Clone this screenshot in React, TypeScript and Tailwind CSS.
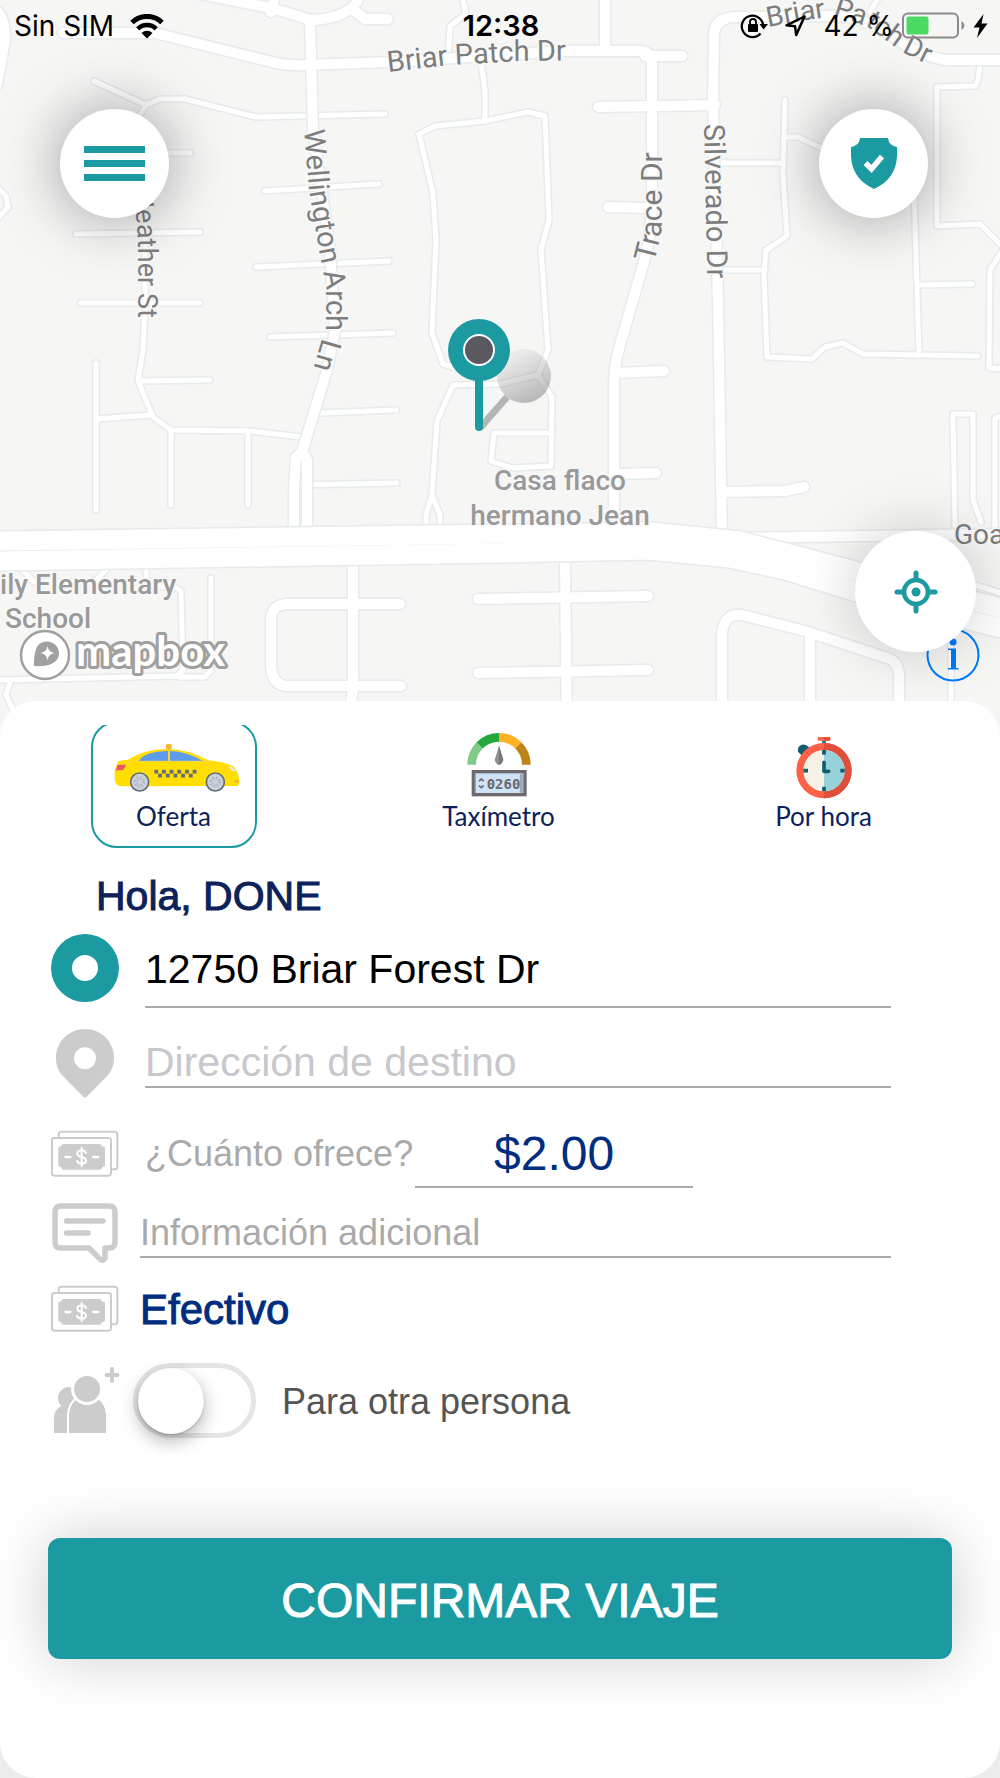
import { useState } from "react"

const smallRoads = [
  "M462 -4 L466 14 L450 26 L448 60",
  "M481 62 L485 90 L485 121",
  "M538 375 L548 350 L541 250 L549 220 L545 116 L528 112 L485 121 L435 126 L419 134 L433 193 L436 240 L432 333 L443 364 L460 369",
  "M538 375 L500 384 L453 385 L437 421 L432 495 L426 515 V530",
  "M432 495 L440 515 V530",
  "M538 375 L552 397 L551 466 L512 468 L491 461 L494 433 L552 433",
  "M94 81 L146 105 L160 99 L185 99 L256 117 L385 114",
  "M146 105 L138 118 L145 200 V310 L143 350 L138 381 L153 417 L171 430 L250 431 L302 437",
  "M168 153 H190",
  "M76 234 L200 232",
  "M81 303 H200",
  "M265 191 L379 184",
  "M256 267 L389 261",
  "M270 337 L393 333",
  "M-4 186 L6 196 L8 207 L-2 218",
  "M96 363 V510",
  "M96 419 L151 415",
  "M138 381 L210 380",
  "M171 430 V505",
  "M248 431 V505",
  "M318 413 L396 410",
  "M295 485 L397 483",
  "M145 565 L148 587 L175 587 L181 591 L183 670 L177 676 L-4 680",
  "M18 565 L34 582 H94 L108 568",
  "M211 578 V670 L205 677 H180",
  "M10 682 L6 695 L14 712",
  "M870 12 L880 -5",
  "M785 100 L783 175 L787 236 L766 250 L764 275 L767 357 L812 359 L825 347 L843 343 L863 354 L978 356",
  "M717 163 H782",
  "M720 270 H765",
  "M787 137 H798 L830 152",
  "M914 190 L919 355",
  "M917 285 L972 284",
  "M980 65 L978 80 L975 86 L937 87 V226 L980 224 L1004 248 L990 270 L989 368 L1004 369",
  "M955 530 L953 414 H973 L973 500 L981 522",
  "M1004 415 L995 418 V528",
  "M975 585 L1004 594",
  "M951 640 V740",
]

const mediumRoads = [
  "M190 -8 L275 9 L311 20 Q335 20 352 8 Q358 2 360 -6",
  "M352 9 L365 19 H388",
  "M275 -5 L271 12",
  "M63 33 H155 L268 61 Q285 66 305 65 L390 62 L565 51 H640 Q652 51 652 65 V200 Q651 240 643 265 L620 345 Q614 365 614 385 V515",
  "M310 20 L313 130 L330 250 L335 330 L327 370 L302 452 L296 457 L294 490 V545",
  "M302 452 L307 460 V545",
  "M-2 12 Q6 22 5 40 L-3 84",
  "M605 -4 V50",
  "M645 56 H682",
  "M598 107 L715 105",
  "M608 207 L650 208",
  "M1004 60 H945 Q920 56 895 38 Q865 16 830 16 L735 17 Q714 18 714 35 L713 100 L715 200 L718 300 L722 540",
  "M615 373 L664 371",
  "M615 474 L656 473",
  "M722 492 L785 491 L804 487",
  "M720 538 L1004 534",
  "M353 560 V690 L346 730",
  "M400 604 H287 Q271 605 271 620 V666 Q272 685 287 686 H401",
  "M478 599 L648 596",
  "M478 673 L648 670",
  "M565 560 L567 740",
  "M722 740 V633 Q724 613 742 615 L805 631 L890 659 Q900 664 899 680 V740",
  "M810 635 V740",
]

const mainRoads = [
  "M-5 541 L500 534 L650 532 L740 541 L805 558 L865 574 L1005 609",
  "M-5 561 L500 553 L650 550 L730 558 L785 570 L860 593 L1005 629",
]

const streets = [
  { id: "briar", d: "M388 72 L450 65 L520 61 L600 60", size: 29, name: "Briar Patch Dr" },
  { id: "briar-east", d: "M768 27 L800 21 L835 16 L868 27 L900 51 L950 76", size: 28, name: "Briar Patch Dr" },
  { id: "wellington", d: "M304 130 L309 190 L320 255 L326 285 L326 325 L310 380", size: 29, name: "Wellington Arch Ln" },
  { id: "heather", d: "M133 191 L137 225 L138 245 V340", size: 27, name: "Heather St" },
  { id: "trace", d: "M654 263 L661 235 L662 215 V130", size: 30, name: "Trace Dr" },
  { id: "silverado", d: "M704 124 L708 310", size: 29, name: "Silverado Dr" },
]

function Roads({ paths, width }: { paths: string[]; width: number }) {
  return (
    <g fill="none" strokeLinecap="round" strokeLinejoin="round">
      {paths.map((d) => (
        <path key={d} d={d} stroke="#e6ecea" strokeWidth={width + 3} />
      ))}
      {paths.map((d) => (
        <path key={d + "fill"} d={d} stroke="#fff" strokeWidth={width} />
      ))}
    </g>
  )
}

function MapCanvas() {
  return (
    <svg className="absolute inset-0 h-full w-full" viewBox="0 0 1000 736" preserveAspectRatio="xMidYMin slice">
      <defs>
        {streets.map((s) => (
          <path key={s.id} id={s.id} d={s.d} />
        ))}
        <linearGradient id="pinShade" x1="0.2" y1="0" x2="0.7" y2="1">
          <stop offset="0.1" stopColor="#999" stopOpacity="0.1" />
          <stop offset="1" stopColor="#888" stopOpacity="0.6" />
        </linearGradient>
      </defs>
      <rect width="1000" height="736" fill="#f6f6f5" />
      <Roads paths={smallRoads} width={5} />
      <Roads paths={mediumRoads} width={10} />
      <Roads paths={mainRoads} width={19} />

      <g fill="#7d7d7d" stroke="#f8f8f8" strokeWidth="3" paintOrder="stroke" fontFamily="Roboto, sans-serif">
        {streets.map((s) => (
          <text key={s.id} fontSize={s.size}>
            <textPath href={"#" + s.id}>{s.name}</textPath>
          </text>
        ))}
        <text x="954" y="544" fontSize="28">Goa</text>
      </g>
      <g fill="#999" stroke="#f8f8f8" strokeWidth="3" paintOrder="stroke" fontFamily="Roboto, sans-serif" fontSize="28" fontWeight="500">
        <text x="560" y="490" textAnchor="middle">Casa flaco</text>
        <text x="560" y="525" textAnchor="middle">hermano Jean</text>
        <text x="0" y="594">ily Elementary</text>
        <text x="5" y="628">School</text>
      </g>

      <path d="M480 428 L507 397" stroke="#b5b5b5" strokeWidth="7" />
      <circle cx="524" cy="376" r="27" fill="url(#pinShade)" />
      <path d="M479 375 V427" stroke="#1b9aa1" strokeWidth="8" strokeLinecap="round" />
      <circle cx="479" cy="350" r="31" fill="#1b9aa1" />
      <circle cx="479" cy="350" r="15" fill="#5a5960" stroke="#fff" strokeWidth="2" />
    </svg>
  )
}

function StatusBar() {
  return (
    <header className="grid h-[52px] grid-cols-[1fr_auto_1fr] items-center pr-3 pl-[14px] font-['Inter',sans-serif] text-[28px] text-black">
      <div className="flex items-center gap-4">
        <span>Sin SIM</span>
        <svg width="34" height="25" viewBox="0 0 34 25">
          <path d="M2 8.500 A21.500 21.500 0 0 1 32 8.500" fill="none" stroke="#000" strokeWidth="5" />
          <path d="M7.800 14.800 A13 13 0 0 1 26.200 14.800" fill="none" stroke="#000" strokeWidth="4.500" />
          <path d="M17 24.500 L11.500 19 A8 8 0 0 1 22.500 19 Z" />
        </svg>
      </div>
      <span className="text-[29px] font-semibold">12:38</span>
      <div className="flex items-center justify-end">
        <svg width="28" height="26" viewBox="0 0 28 26">
          <path d="M20.500 20.500 A10.700 10.700 0 1 1 23 11.500" fill="none" stroke="#000" strokeWidth="2.200" />
          <path d="M19.500 11 H28 L23.500 16.500 Z" />
          <rect x="8" y="11" width="10" height="8" rx="1" />
          <path d="M10 11.500 V9 A3 3 0 0 1 16 9 V11.500" fill="none" stroke="#000" strokeWidth="1.800" />
        </svg>
        <svg className="ml-4" width="23" height="24" viewBox="0 0 23 24">
          <path d="M20.500 2.500 L2.500 11.300 L11 12.200 L12.200 21 Z" fill="none" stroke="#000" strokeWidth="2.500" strokeLinejoin="round" />
        </svg>
        <span className="ml-4">42 %</span>
        <svg className="ml-2" width="63" height="28" viewBox="0 0 63 28">
          <rect x="1" y="1.500" width="55" height="24" rx="5" fill="none" stroke="#8c8c8c" strokeWidth="2" />
          <rect x="4.500" y="4.500" width="22" height="18" rx="2" fill="#4cd964" />
          <path d="M59.500 9 Q62.500 11 62.500 13.500 Q62.500 16 59.500 18 Z" fill="#8c8c8c" />
        </svg>
        <svg className="ml-2" width="15" height="26" viewBox="0 0 15 26">
          <path d="M10.500 1 L0.500 14.500 H6.500 L4 25 L14.500 10.500 H8.500 Z" />
        </svg>
      </div>
    </header>
  )
}

function MapboxLogo() {
  return (
    <svg width="216" height="54" viewBox="0 0 216 54">
      <circle cx="26" cy="27" r="24" fill="#fff" stroke="#a0a09e" strokeWidth="2.500" />
      <path d="M15 38 C15 25 16.500 13.500 28 13.500 A12 12 0 0 1 40 25.500 C40 35 29 39 15 38 Z" fill="#a0a09e" />
      <path d="M28.500 18 Q29.500 24 35.500 25 Q29.500 26 28.500 32 Q27.500 26 21.500 25 Q27.500 24 28.500 18 Z" fill="#fff" />
      <text x="57" y="38" fontFamily="Lato, sans-serif" fontSize="42" fontWeight="700" fill="#fff" stroke="#a0a09e" strokeWidth="6" strokeLinejoin="round" paintOrder="stroke">
        mapbox
      </text>
    </svg>
  )
}

function TaxiIcon() {
  return (
    <svg width="132" height="68" viewBox="202 99 396 204">
      <path d="M376 152 V139 Q376 135 380 135 H389 Q393 135 393 139 V152 Z" fill="#fdb62f" />
      <path d="M222 215 L232 187 Q240 184 262 182 Q310 151 375 150 Q440 149 503 184 Q555 190 580 203 Q594 216 596 250 Q596 260 588 261 L240 262 Q224 260 222 240 Z" fill="#ffde00" />
      <path d="M295 186 Q310 158 382 156 V186 Z" fill="#5d9cec" />
      <path d="M388 156 Q440 158 486 186 H388 Z" fill="#5d9cec" />
      <path d="M262 187 H510" stroke="#fdcf55" strokeWidth="3" />
      <path d="M385 154 V188" stroke="#fdcf55" strokeWidth="3" />
      <path d="M231 197 H257 L247 214 H225 Z" fill="#ed5565" />
      <path d="M562 201 Q580 203 588 217 L575 216 Z" fill="#e6e9ed" />
      <path d="M583 247 H594" stroke="#f6a04d" strokeWidth="5" />
      <path d="M341 218 H470" stroke="#656d78" strokeWidth="11" strokeDasharray="11.500 11.500" />
      <path d="M352.500 230 H460" stroke="#656d78" strokeWidth="11" strokeDasharray="11.500 11.500" />
      {[297, 524].map((cx) => (
        <g key={cx}>
          <circle cx={cx} cy="249" r="27" fill="#ccd1d9" stroke="#656d78" strokeWidth="5" />
          <circle cx={cx} cy="249" r="12" fill="none" stroke="#aab2bc" strokeWidth="9" strokeDasharray="4 5.400" />
        </g>
      ))}
    </svg>
  )
}

function TaximeterIcon() {
  return (
    <svg width="70" height="68" viewBox="132 99 210 204">
      <g fill="none" strokeWidth="26">
        <path d="M155 197 A82 82 0 0 1 179 139" stroke="#7dcb87" />
        <path d="M179 139 A82 82 0 0 1 237 115" stroke="#24a839" />
        <path d="M237 115 A82 82 0 0 1 295 139" stroke="#ffb123" />
        <path d="M295 139 A82 82 0 0 1 319 197" stroke="#bf8418" />
      </g>
      <path d="M237 140 L250 183 Q246 196 237 198 Q227 196 224 183 Z" fill="#909090" />
      <path d="M237 140 L250 183 Q246 196 237 198 Z" fill="#777" />
      <rect x="160" y="218" width="155" height="69" fill="#cfe3f6" stroke="#6c686e" strokeWidth="10" />
      <path d="M166 224 V281" stroke="#99a7bb" strokeWidth="4" />
      <path d="M304 224 V281" stroke="#99a7bb" strokeWidth="9" />
      <path d="M177 246 L184 240 L191 246 M177 260 L184 266 L191 260" fill="none" stroke="#6c686e" strokeWidth="5" />
      <text x="200" y="269" fontFamily="'DejaVu Sans Mono', monospace" fontSize="42" fontWeight="700" fill="#6c686e">
        0260
      </text>
    </svg>
  )
}

function StopwatchIcon() {
  return (
    <svg width="60" height="68" viewBox="1121 99 180 204">
      <path d="M1145 170 L1133 158 Q1130 142 1145 137 Q1156 134 1166 145 L1170 148 Z" fill="#0f5d6e" />
      <path d="M1211 124 V136" stroke="#2d8296" strokeWidth="12" />
      <rect x="1192" y="114" width="38" height="11" rx="3" fill="#fd6249" />
      <path d="M1211 114 H1227 Q1230 114 1230 119 Q1230 125 1227 125 H1211 Z" fill="#e04f3a" />
      <circle cx="1211" cy="215" r="83" fill="#fd6249" />
      <path d="M1211 132 A83 83 0 0 1 1211 298 Z" fill="#e04f3a" />
      <circle cx="1211" cy="215" r="62" fill="#f5f1e6" />
      <path d="M1211 153 A62 62 0 0 1 1211 277 Z" fill="#97d1d9" />
      <g fill="none" stroke="#0f5d6e" strokeWidth="11">
        <path d="M1211 153 V167 M1211 263 V277 M1149 215 H1163 M1260 215 H1273" />
        <path d="M1211 190 V217 H1225" strokeLinecap="round" strokeLinejoin="round" />
      </g>
    </svg>
  )
}

function OriginIcon() {
  return (
    <svg width="70" height="70" viewBox="0 0 210 210">
      <path fillRule="evenodd" d="M105 3 a102 102 0 1 1 0 204 a102 102 0 1 1 0 -204 Z M105 66 a39 39 0 1 0 0 78 a39 39 0 1 0 0 -78 Z" fill="#1b9aa1" />
    </svg>
  )
}

function DestinationIcon() {
  return (
    <svg width="70" height="70" viewBox="60 358 210 210">
      <path
        fillRule="evenodd"
        d="M165 361 C213 361 252 399 252 447 C252 473 243 489 232 501 L172 563 Q165 570 158 563 L98 501 C87 489 78 473 78 447 C78 399 117 361 165 361 Z M165 416 a33 33 0 1 0 0 66 a33 33 0 1 0 0 -66 Z"
        fill="#ccc"
      />
    </svg>
  )
}

function BillsIcon() {
  return (
    <svg width="70" height="49" viewBox="60 655 210 147">
      <rect x="66" y="682" width="177" height="113" rx="7" fill="none" stroke="#ccc" strokeWidth="6" />
      <path d="M86 682 V671 Q86 663 94 663 H254 Q262 663 262 671 V768 Q262 776 254 776 H244" fill="none" stroke="#ccc" strokeWidth="6" />
      <path d="M98 700 H212 Q214 708 225 710 V766 Q215 768 212 777 H98 Q95 768 85 766 V710 Q95 708 98 700 Z" fill="#ccc" />
      <path d="M106 739 H121 M190 739 H205" stroke="#fff" strokeWidth="7" strokeLinecap="round" />
      <path d="M168 727 Q164 719 155 719 Q142 720 142 729 Q143 737 155 739 Q168 742 168 750 Q167 759 155 759 Q145 759 141 751 M155 711 V767" fill="none" stroke="#fff" strokeWidth="6" strokeLinecap="round" />
    </svg>
  )
}

function CommentIcon() {
  return (
    <svg width="70" height="70" viewBox="50 1199 70 70" fill="none" stroke="#ccc" strokeWidth="5.500" strokeLinecap="round" strokeLinejoin="round">
      <path d="M61 1207 H109 Q115 1207 115 1213 V1243 Q115 1249 109 1249 H105 V1259 Q103 1263 100 1260 L89 1249 H61 Q55 1249 55 1243 V1213 Q55 1207 61 1207 Z" />
      <path d="M66.500 1222 H103 M66.500 1234 H88" />
    </svg>
  )
}

function PeopleIcon() {
  return (
    <svg width="70" height="70" viewBox="50 1366 70 70" fill="#ccc">
      <circle cx="69" cy="1399" r="11" />
      <path d="M54 1434 V1419 Q54 1411 61 1407 L70 1410 V1434 Z" />
      <path d="M69 1434 V1415 Q70 1405 77 1400 H98 Q105 1405 106 1415 V1434 Z" stroke="#fff" strokeWidth="4" paintOrder="stroke" />
      <circle cx="87" cy="1390" r="13" stroke="#fff" strokeWidth="6" paintOrder="stroke" />
      <rect x="60" y="1434" width="50" height="3" fill="#fff" />
      <path d="M112 1370 V1382 M106.500 1376 H117.500" stroke="#ccc" strokeWidth="4" strokeLinecap="round" />
    </svg>
  )
}

const rideTypes = [
  { id: "oferta", label: "Oferta", icon: <TaxiIcon /> },
  { id: "taximetro", label: "Taxímetro", icon: <TaximeterIcon /> },
  { id: "hora", label: "Por hora", icon: <StopwatchIcon /> },
]

function RideTypes() {
  const [active, setActive] = useState("oferta")
  return (
    <div className="grid h-[123px] grid-cols-3 content-end justify-items-center overflow-hidden pr-[14px] pl-[11px]">
      {rideTypes.map((type) => (
        <button
          key={type.id}
          type="button"
          onClick={() => setActive(type.id)}
          className={
            "flex h-[127px] w-[166px] flex-col items-center justify-end rounded-[26px] border-2 pb-[14px] font-['Lato',sans-serif] text-[26px] leading-8 text-[#0d215b] " +
            (active === type.id ? "border-[#1b9aa1]" : "border-transparent")
          }
        >
          {type.icon}
          {type.label}
        </button>
      ))}
    </div>
  )
}

function TripForm() {
  const [pickup, setPickup] = useState("12750 Briar Forest Dr")
  const [offer, setOffer] = useState("$2.00")
  return (
    <form className="px-[50px]">
      <h1 className="mt-6 pl-[46px] text-[41px] leading-[48px] font-medium text-[#0d215b] [-webkit-text-stroke:1px]">Hola, DONE</h1>

      <div className="mt-2 flex h-20 items-center gap-[25px]">
        <OriginIcon />
        <input
          aria-label="Dirección de origen"
          value={pickup}
          onChange={(e) => setPickup(e.target.value)}
          className="mr-[59px] h-full min-w-0 flex-1 border-b-2 border-[#aaa] pt-1 text-[41px] text-black outline-none"
        />
      </div>

      <div className="mt-5 flex h-[70px] items-center gap-[25px]">
        <DestinationIcon />
        <input
          aria-label="Dirección de destino"
          placeholder="Dirección de destino"
          className="mr-[59px] h-[50px] min-w-0 flex-1 border-b-2 border-[#aaa] pt-0.5 text-[41px] outline-none placeholder:text-[#c7c7cd]"
        />
      </div>

      <div className="mt-5 flex h-[70px] items-center">
        <BillsIcon />
        <label htmlFor="offer" className="ml-[25px] pt-0.5 text-[36px] text-[#aaa]">
          ¿Cuánto ofrece?
        </label>
        <input
          id="offer"
          value={offer}
          onChange={(e) => setOffer(e.target.value)}
          className="ml-0.5 h-full w-[278px] border-b-2 border-[#aaa] pt-0.5 text-center text-[48px] text-[#002d7f] outline-none"
        />
      </div>

      <div className="mt-[10px] flex h-[70px] items-center gap-5">
        <CommentIcon />
        <input
          aria-label="Información adicional"
          placeholder="Información adicional"
          className="mr-[59px] h-[50px] min-w-0 flex-1 border-b-2 border-[#aaa] pt-0.5 text-[36px] outline-none placeholder:text-[#aaa]"
        />
      </div>

      <div className="mt-[10px] flex h-[60px] items-center gap-5">
        <BillsIcon />
        <button type="button" className="pt-0.5 text-[42px] font-medium text-[#002d7f] [-webkit-text-stroke:1px]">
          Efectivo
        </button>
      </div>

      <div className="mt-6 flex h-[76px] items-center">
        <PeopleIcon />
        <input
          id="other"
          type="checkbox"
          role="switch"
          className="ml-[13px] h-[75px] w-[123px] appearance-none rounded-full border-[5px] border-[#e5e5e5] bg-white before:block before:size-[66px] before:rounded-full before:bg-white before:shadow-[0_7px_18px_rgba(0,0,0,0.3),0_1px_2px_rgba(0,0,0,0.2)] before:content-[''] checked:bg-[#1b9aa1] checked:before:translate-x-12"
        />
        <label htmlFor="other" className="ml-[26px] pt-1 text-[36px] text-[#555]">
          Para otra persona
        </label>
      </div>
    </form>
  )
}

export default function App() {
  return (
    <div className="flex min-h-screen flex-col bg-[#ececec] font-['Liberation_Sans',Arial,sans-serif]">
      <section className="relative flex h-[736px] flex-col overflow-hidden">
        <MapCanvas />
        <div className="relative flex flex-1 flex-col">
          <StatusBar />
          <div className="mt-[57px] flex justify-between pr-[72px] pl-[60px]">
            <button
              type="button"
              aria-label="Menú"
              className="flex size-[109px] flex-col items-center justify-center gap-[7px] rounded-full bg-white shadow-[0_0_60px_rgba(0,0,0,0.38)]"
            >
              <span className="h-[7px] w-[61px] bg-[#1b9aa1]" />
              <span className="h-[7px] w-[61px] bg-[#1b9aa1]" />
              <span className="h-[7px] w-[61px] bg-[#1b9aa1]" />
            </button>
            <button
              type="button"
              aria-label="Seguridad"
              className="flex size-[109px] items-center justify-center rounded-full bg-white shadow-[0_0_60px_rgba(0,0,0,0.38)]"
            >
              <svg width="46" height="51" viewBox="0 0 46 51">
                <path d="M9 0 H37 Q38 8 46 9 V18 Q45 41 23 51 Q1 41 0 18 V9 Q8 8 9 0 Z" fill="#1b9aa1" />
                <path d="M14.500 25 L20.500 31 L31 18.500" fill="none" stroke="#fff" strokeWidth="5.500" />
              </svg>
            </button>
          </div>
          <div className="mt-auto flex items-center justify-between pr-5 pb-[54px] pl-[19px]">
            <MapboxLogo />
            <a href="#info" aria-label="Información del mapa">
              <svg width="54" height="54" viewBox="0 0 54 54">
                <circle cx="27" cy="27" r="25.500" fill="none" stroke="#007aff" strokeWidth="2" />
                <path d="M22 20.500 H30 V40 H32.500 V41.500 H22 V40 H25 V22 H22 Z" fill="#007aff" />
                <circle cx="27" cy="14" r="3.500" fill="#007aff" />
              </svg>
            </a>
          </div>
          <button
            type="button"
            aria-label="Mi ubicación"
            className="absolute right-6 bottom-[84px] flex size-[121px] items-center justify-center rounded-full bg-white shadow-[0_0_60px_rgba(0,0,0,0.2)]"
          >
            <svg width="44" height="44" viewBox="0 0 44 44" fill="none" stroke="#1b9aa1" strokeLinecap="round">
              <circle cx="22" cy="22" r="12" strokeWidth="4.500" />
              <circle cx="22" cy="22" r="4.500" fill="#1b9aa1" stroke="none" />
              <path d="M22 3 V9 M22 35 V41 M3 22 H9 M35 22 H41" strokeWidth="5" />
            </svg>
          </button>
        </div>
      </section>

      <main className="relative -mt-[35px] flex flex-1 flex-col rounded-[36px] bg-white pt-6 pb-[117px]">
        <RideTypes />
        <TripForm />
        <button
          type="button"
          className="mx-12 mt-[100px] h-[121px] rounded-xl bg-[#1b9aa1] pt-1 text-[48px] font-medium text-white shadow-[0_0_60px_rgba(0,0,0,0.2)] [-webkit-text-stroke:1px]"
        >
          CONFIRMAR VIAJE
        </button>
      </main>
    </div>
  )
}
